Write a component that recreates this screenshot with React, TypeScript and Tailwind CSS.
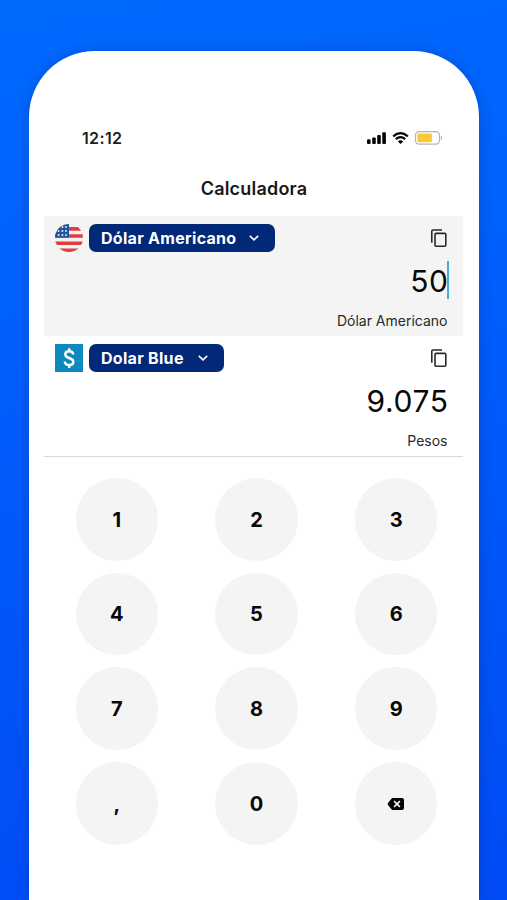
import type { ReactNode } from "react";

const CopyIcon = () => (
  <svg width="16" height="19" viewBox="0 0 16 19" fill="none" stroke="#292929" strokeWidth="1.6">
    <path d="M.8 13.8V2.2Q.8 1 2 1H11" />
    <rect x="4" y="4.4" width="10.8" height="12.8" rx="1" />
  </svg>
);

const FlagIcon = () => (
  <svg width="28" height="28" viewBox="0 0 28 28">
    <defs>
      <clipPath id="flag">
        <circle cx="14" cy="14" r="14" />
      </clipPath>
    </defs>
    <g clipPath="url(#flag)">
      <rect width="28" height="28" fill="#f3f1f1" />
      <path
        d="M0 4.9H28M0 12H28M0 19.2H28M0 26.4H28"
        stroke="#df3d43"
        strokeWidth="3.6"
      />
      <rect width="14" height="13.6" fill="#21569f" />
      <g fill="#e5edf5">
        <circle cx="7.4" cy="3" r=".95" />
        <circle cx="11" cy="3" r=".95" />
        <circle cx="3.6" cy="7" r=".95" />
        <circle cx="7.4" cy="7" r=".95" />
        <circle cx="11" cy="7" r=".95" />
        <circle cx="3.6" cy="11" r=".95" />
        <circle cx="7.4" cy="11" r=".95" />
        <circle cx="11" cy="11" r=".95" />
      </g>
    </g>
  </svg>
);

const PesoIcon = () => (
  <svg width="28" height="28" viewBox="0 0 28 28">
    <rect width="28" height="28" fill="#0d89bd" />
    <path
      d="M18.2 10.5C18 8.4 16.5 7.3 14.2 7.3C11.9 7.3 10.3 8.5 10.3 10.4C10.3 12.4 11.7 13.2 14.2 14C17 14.9 18.3 15.8 18.3 17.7C18.3 19.9 16.6 21.1 14.2 21.1C11.6 21.1 10 19.8 9.8 17.5M14.2 4.3V7.5M14.2 20.8V24"
      fill="none"
      stroke="#fff"
      strokeWidth="2.5"
    />
  </svg>
);

const BackspaceIcon = () => (
  <svg width="18" height="14" viewBox="0 0 18 14">
    <path d="M5.8 1H15Q17 1 17 3V11Q17 13 15 13H5.8Q5 13 4.4 12.2L1 8Q.3 7 1 6L4.4 1.8Q5 1 5.8 1Z" fill="#050505" />
    <path d="M7.1 4.1L12.9 9.9M12.9 4.1L7.1 9.9" stroke="#f4f4f4" strokeWidth="1.5" />
  </svg>
);

const StatusIcons = () => (
  <svg width="76" height="16" viewBox="0 0 76 16">
    <g fill="#050505">
      <rect x="1" y="9.3" width="3.6" height="4.7" rx="1.1" />
      <rect x="6.2" y="7.4" width="3.6" height="6.6" rx="1.1" />
      <rect x="11.2" y="5" width="3.6" height="9" rx="1.1" />
      <rect x="16.3" y="2.2" width="3.6" height="11.8" rx="1.1" />
      <path d="M34.5 14L31.8 11.4Q34.5 9.3 37.2 11.4Z" />
    </g>
    <path
      d="M27.2 6.3Q34.5 .1 41.8 6.3M29.8 9.1Q34.5 5.3 39.2 9.1"
      fill="none"
      stroke="#050505"
      strokeWidth="2.2"
    />
    <rect x="49.5" y="1.6" width="24" height="12.6" rx="3.6" fill="#fff" stroke="#b5b5b0" strokeWidth="1.2" />
    <rect x="51.4" y="3.5" width="14.7" height="8.8" rx="1.7" fill="#f8ca36" />
    <path d="M74.8 5.8Q76 6.3 76 7.9Q76 9.4 74.8 9.9Z" fill="#aaa" />
  </svg>
);

type CurrencyProps = {
  icon: ReactNode;
  name: string;
  amount: string;
  unit: string;
  active?: boolean;
  pillWidth: string;
};

function Currency({ icon, name, amount, unit, active, pillWidth }: CurrencyProps) {
  return (
    <section className={`h-[120px] pt-2 pl-[11px] pr-4 ${active ? "bg-[#f4f4f4]" : "h-[121px] border-b border-[#d9d9d9]"}`}>
      <div className="flex h-7 items-center">
        {icon}
        <button
          className={`ml-[6px] flex h-7 items-center justify-between rounded-[7px] bg-[#022878] pl-3 pr-4 text-[16px] font-bold text-white ${pillWidth}`}
        >
          <span className="whitespace-nowrap tracking-[0.3px]">{name}</span>
          <svg width="10" height="6" viewBox="0 0 10 6" fill="none" stroke="#fff" strokeWidth="1.6">
            <path d="M.8 .8L5 4.8L9.2 .8" />
          </svg>
        </button>
        <div className="ml-auto"><CopyIcon /></div>
      </div>
      <div className="relative mt-[7px] flex h-[44px] items-center justify-end text-[30px] leading-none text-[#080808]">
        <span className="-mr-[1.5px] tracking-[0.6px]">{amount}</span>
        {active && <span className="absolute -right-[2px] top-[2px] h-[38px] w-[2px] bg-[#48afd0]" />}
      </div>
      <div className="mt-[8px] text-right text-[14px] leading-5 text-[#292929]">
        <span className="-mr-[0.5px]">{unit}</span>
      </div>
    </section>
  );
}

const keys = ["1", "2", "3", "4", "5", "6", "7", "8", "9", ",", "0", "del"];

export default function App() {
  return (
    <div className="h-[900px] w-[507px] overflow-hidden bg-linear-[170deg] from-[#006aff] to-[#004bf4] pl-[29px] pt-[51px] font-['Inter',sans-serif]">
      <main className="h-[849px] w-[450px] rounded-t-[66px] bg-white px-[15px] pt-[76px] shadow-[0_0_14px_rgba(0,35,130,0.3)]">
        <header className="flex h-[22px] items-center justify-between pl-[38px] pr-[22px]">
          <time className="text-[16px] font-semibold tracking-[0.35px] text-[#1c1c1c]">12:12</time>
          <StatusIcons />
        </header>
        <h1 className="mt-[26px] h-[28px] text-center text-[18px] font-semibold leading-7 tracking-[0.2px] text-[#171717]">
          Calculadora
        </h1>
        <div className="mt-[13px] w-[419px]">
          <Currency icon={<FlagIcon />} name="Dólar Americano" amount="50" unit="Dólar Americano" active pillWidth="w-[186px]" />
          <Currency icon={<PesoIcon />} name="Dolar Blue" amount="9.075" unit="Pesos" pillWidth="w-[134.5px]" />
        </div>
        <div className="ml-[3px] mt-[21px] grid w-[419px] grid-cols-3 justify-items-center gap-y-[12.2px]">
          {keys.map((key) => (
            <button
              key={key}
              aria-label={key}
              className="flex size-[82.5px] items-center justify-center rounded-full bg-[#f4f4f4] pt-px text-[20px] font-bold text-[#080808]"
            >
              {key === "del" ? <BackspaceIcon /> : key}
            </button>
          ))}
        </div>
      </main>
    </div>
  );
}
